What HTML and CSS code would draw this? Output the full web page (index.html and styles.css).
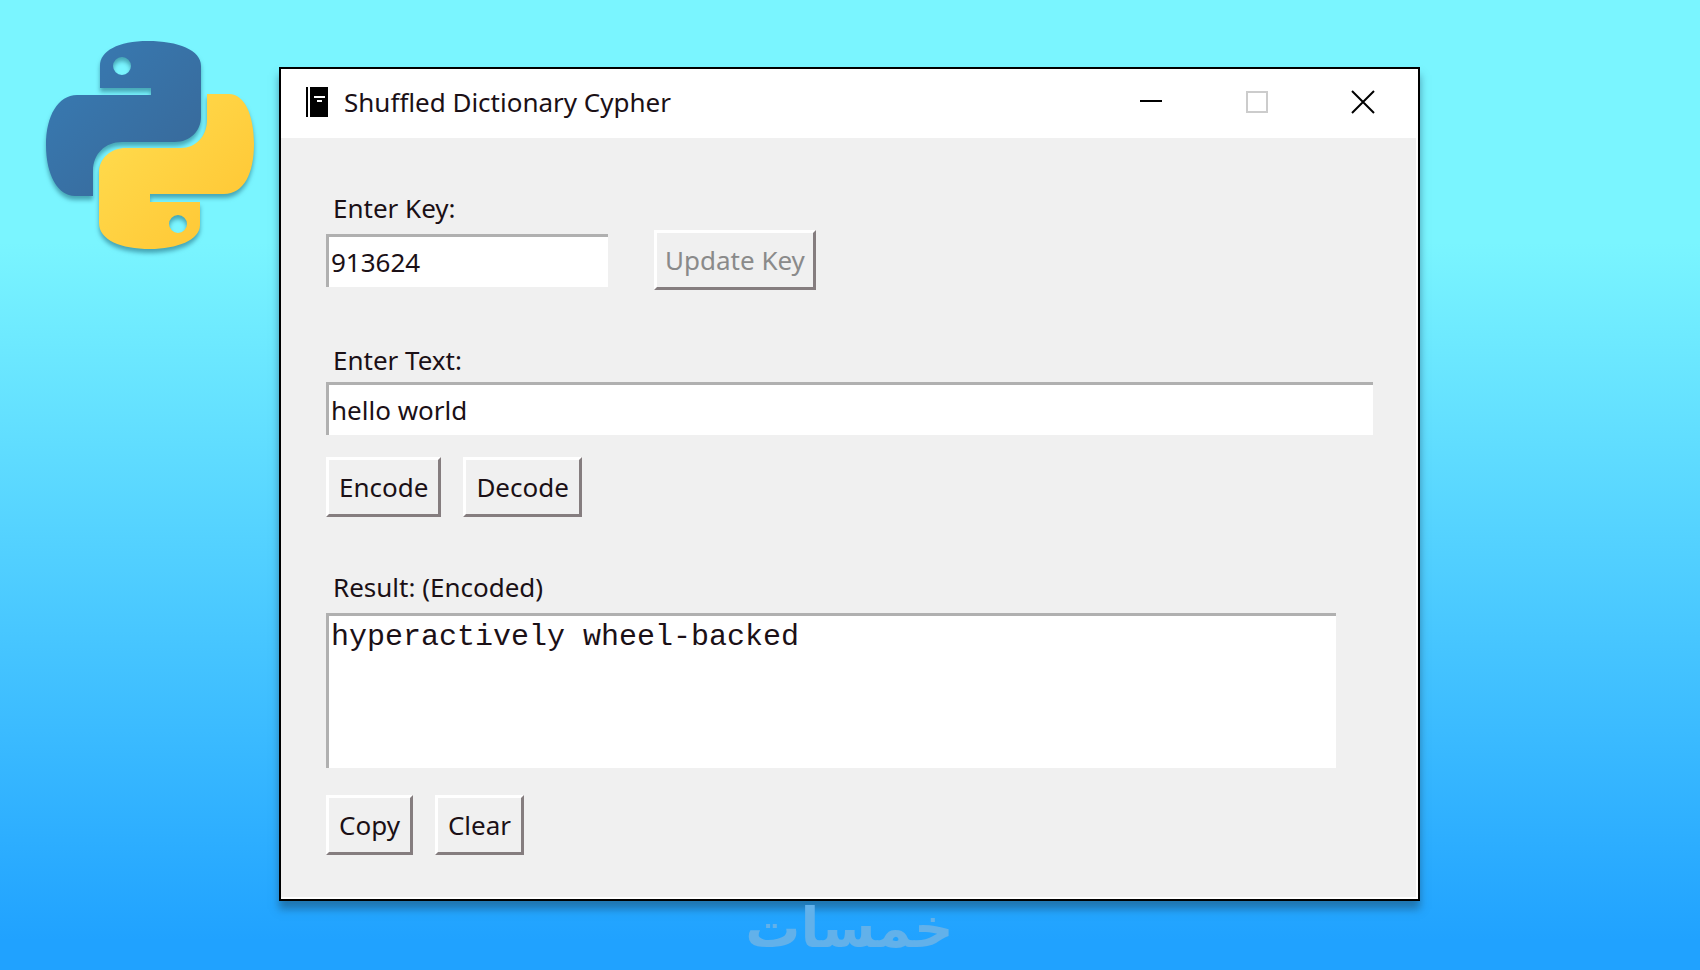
FILE: index.html
```
<!DOCTYPE html>
<html lang="en">
<head>
    <meta charset="UTF-8">
    <meta name="viewport" content="width=device-width, initial-scale=1.0">
    <title>Shuffled Dictionary Cypher</title>
    <link rel="stylesheet" href="styles.css">
</head>
<body>
    <div class="page">
        <svg class="python-logo" viewBox="0 0 208 208" role="img" aria-label="Python">
            <defs>
                <linearGradient id="blue" x1="0" y1="0" x2="1" y2="1">
                    <stop offset="0.1" stop-color="#387ab2"/>
                    <stop offset="0.85" stop-color="#386a9b"/>
                </linearGradient>
                <linearGradient id="yellow" x1="0" y1="0" x2="1" y2="1">
                    <stop offset="0.1" stop-color="#ffdc4e"/>
                    <stop offset="0.8" stop-color="#ffc937"/>
                </linearGradient>
            </defs>
            <path fill="url(#blue)" fill-rule="evenodd" d="M102 0C72 0 54 10 54 25V47H105V54H31C12 54 0 75 0 104C0 134 12 155 29 155H47V130C47 113 59 101 76 101H129C144 101 155 90 155 76V25C155 9 132 0 102 0ZM76 16A9 9 0 1 1 76 34A9 9 0 1 1 76 16Z"/>
            <path fill="url(#yellow)" fill-rule="evenodd" d="M161 53H183C199 53 208 75 208 103C208 132 198 153 178 153H104V161H154V184C154 199 131 208 104 208C75 208 53 199 53 182V132C53 117 65 107 80 107H135C150 107 161 95 161 79ZM132 174A9 9 0 1 0 132 192A9 9 0 1 0 132 174Z"/>
        </svg>

        <main class="window">
            <header class="title-bar">
                <svg class="book-icon" viewBox="0 0 22 30" aria-hidden="true">
                    <path d="M0 0h2v30H0zM4 0h18v30H4z"/>
                    <path fill="#fff" d="M8 9h11v2H8zM11 13h5v2h-5z"/>
                </svg>
                <h1>Shuffled Dictionary Cypher</h1>
                <div class="window-controls">
                    <button type="button" aria-label="Minimize">
                        <svg viewBox="0 0 24 24"><path d="M1 11h22"/></svg>
                    </button>
                    <button type="button" aria-label="Maximize" disabled>
                        <svg viewBox="0 0 24 24"><path d="M2 2h20v20H2z"/></svg>
                    </button>
                    <button type="button" aria-label="Close">
                        <svg viewBox="0 0 24 24"><path d="M1 1l22 22M23 1L1 23"/></svg>
                    </button>
                </div>
            </header>

            <form class="content">
                <section class="group">
                    <label for="key">Enter Key:</label>
                    <div class="key-row">
                        <input class="field key-field" type="text" id="key" value="913624">
                        <button class="btn" type="button" disabled>Update Key</button>
                    </div>
                </section>

                <section class="group">
                    <label for="text">Enter Text:</label>
                    <input class="field" type="text" id="text" value="hello world">
                    <div class="button-row">
                        <button class="btn" type="button">Encode</button>
                        <button class="btn" type="button">Decode</button>
                    </div>
                </section>

                <section class="group">
                    <label for="result">Result: (Encoded)</label>
                    <textarea class="field result-field" id="result" spellcheck="false">hyperactively wheel-backed</textarea>
                    <div class="button-row result-buttons">
                        <button class="btn" type="button">Copy</button>
                        <button class="btn" type="button">Clear</button>
                    </div>
                </section>
            </form>
        </main>

        <div class="watermark" lang="ar" dir="rtl">خمسات</div>
    </div>
</body>
</html>
```
FILE: styles.css
```
:root {
    --face: #f0f0f0;
    --ink: #1b1016;
    --shadow: #857d7f;
}

* {
    margin: 0;
    padding: 0;
    box-sizing: border-box;
}

body {
    background: linear-gradient(to bottom, #7af5ff 25%, #20a2ff 97%);
    color: var(--ink);
    font-family: "Noto Sans", sans-serif;
    font-size: 26px;
    min-height: 100vh;
}

.page {
    position: relative;
    min-height: 100vh;
    padding: 67px 280px 0 279px;
}

.python-logo {
    position: absolute;
    top: 41px;
    left: 46px;
    width: 208px;
    height: 208px;
    filter: drop-shadow(0 4px 2px rgba(20, 90, 110, 0.5));
}

.window {
    width: 100%;
    background-color: var(--face);
    border: 2px solid #000;
    box-shadow: 0 8px 8px rgba(25, 70, 100, 0.5);
}

.title-bar {
    display: flex;
    align-items: center;
    height: 69px;
    padding: 0 43px 3px 25px;
    background-color: #fff;
}

.book-icon {
    width: 22px;
    height: 30px;
    margin-right: 16px;
}

h1 {
    font-size: 26px;
    font-weight: 400;
}

.window-controls {
    display: flex;
    gap: 82px;
    margin-left: auto;
}

.window-controls button {
    width: 24px;
    height: 24px;
    border: none;
    background: none;
}

.window-controls svg {
    display: block;
    fill: none;
    stroke: #000;
    stroke-width: 2;
}

.window-controls button:disabled svg {
    stroke: #ccc;
}

.content {
    padding: 52px 43px 42px 45px;
    border: 2px solid #fff;
    border-width: 0 2px 2px 0;
}

.group + .group {
    margin-top: 52px;
}

label {
    display: block;
    padding-left: 7px;
    line-height: 36px;
    margin-bottom: 4px;
}

.field {
    display: block;
    width: 100%;
    height: 53px;
    padding: 0 2px;
    border: solid #b0b0b0;
    border-width: 3px 0 0 3px;
    background-color: #fff;
    color: var(--ink);
    font-family: inherit;
    font-size: 26px;
    outline: none;
}

.key-row,
.button-row {
    display: flex;
    align-items: center;
}

.key-row {
    gap: 46px;
}

.key-field {
    width: 282px;
}

.button-row {
    gap: 22px;
    margin-top: 22px;
}

.result-field {
    width: calc(100% - 37px);
    height: 155px;
    margin-top: 8px;
    padding-top: 4px;
    font-family: "Liberation Mono", monospace;
    font-size: 30px;
    resize: none;
}

.result-buttons {
    margin-top: 27px;
}

.btn {
    height: 60px;
    padding: 0 8px;
    border: 3px solid;
    border-color: #fff var(--shadow) var(--shadow) #fff;
    background-color: var(--face);
    color: var(--ink);
    font-family: inherit;
    font-size: 26px;
}

.button-row .btn {
    padding: 0 10px;
}

.btn:disabled {
    color: #8a8a8a;
}

.watermark {
    color: #62b1ea;
    font-family: "DejaVu Sans", sans-serif;
    font-size: 55px;
    font-weight: 700;
    line-height: 54px;
    text-align: center;
}
```
